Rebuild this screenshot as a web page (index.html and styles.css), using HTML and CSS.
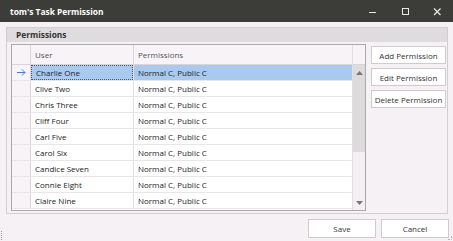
FILE: index.html
```html
<!DOCTYPE html>
<html>
<head>
<meta charset="utf-8">
<link rel="stylesheet" href="styles.css">
</head>
<body>
<div class="window">
  <div class="titlebar">
    <span class="title">tom's Task Permission</span>
    <div class="controls">
      <svg class="ctl" width="32" height="22" viewBox="0 0 32 22"><line x1="12" y1="12.5" x2="19" y2="12.5" stroke="#e8e8e8" stroke-width="1"/></svg>
      <svg class="ctl" width="32" height="22" viewBox="0 0 32 22"><rect x="13.5" y="8.5" width="6" height="6" fill="none" stroke="#e8e8e8" stroke-width="1"/></svg>
      <svg class="ctl" width="32" height="22" viewBox="0 0 32 22"><path d="M13 8.5 L19.5 15 M19.5 8.5 L13 15" stroke="#e8e8e8" stroke-width="1.2"/></svg>
    </div>
  </div>
  <div class="content">
    <div class="group">
      <div class="group-header">Permissions</div>
      <div class="group-body">
        <div class="grid">
          <div class="grid-table">
            <div class="row head">
              <div class="cell ind"></div>
              <div class="cell user">User</div>
              <div class="cell perm">Permissions</div>
            </div>
            <div class="row selected">
              <div class="cell ind"><svg width="9" height="7" viewBox="0 0 9 7"><path d="M0 3.5 H8 M5 0.5 L8 3.5 L5 6.5" fill="none" stroke="#3d7fd6" stroke-width="1"/></svg></div>
              <div class="cell user"><span class="focus">Charlie One</span></div>
              <div class="cell perm">Normal C, Public C</div>
            </div>
            <div class="row"><div class="cell ind"></div><div class="cell user">Clive Two</div><div class="cell perm">Normal C, Public C</div></div>
            <div class="row"><div class="cell ind"></div><div class="cell user">Chris Three</div><div class="cell perm">Normal C, Public C</div></div>
            <div class="row"><div class="cell ind"></div><div class="cell user">Cliff Four</div><div class="cell perm">Normal C, Public C</div></div>
            <div class="row"><div class="cell ind"></div><div class="cell user">Carl Five</div><div class="cell perm">Normal C, Public C</div></div>
            <div class="row"><div class="cell ind"></div><div class="cell user">Carol Six</div><div class="cell perm">Normal C, Public C</div></div>
            <div class="row"><div class="cell ind"></div><div class="cell user">Candice Seven</div><div class="cell perm">Normal C, Public C</div></div>
            <div class="row"><div class="cell ind"></div><div class="cell user">Connie Eight</div><div class="cell perm">Normal C, Public C</div></div>
            <div class="row"><div class="cell ind"></div><div class="cell user">Claire Nine</div><div class="cell perm">Normal C, Public C</div></div>
          </div>
          <div class="vscroll">
            <div class="vs-head"></div>
            <div class="vs-track">
              <div class="vs-btn"><svg width="7" height="4" viewBox="0 0 7 4"><path d="M0 4 L3.5 0 L7 4 Z" fill="#777"/></svg></div>
              <div class="vs-thumb"></div>
              <div class="vs-rest"></div>
              <div class="vs-btn"><svg width="7" height="4" viewBox="0 0 7 4"><path d="M0 0 L3.5 4 L7 0 Z" fill="#777"/></svg></div>
            </div>
          </div>
        </div>
        <div class="side-buttons">
          <div class="btn">Add Permission</div>
          <div class="btn">Edit Permission</div>
          <div class="btn">Delete Permission</div>
        </div>
      </div>
    </div>
    <div class="footer">
      <div class="btn wide">Save</div>
      <div class="btn wide">Cancel</div>
    </div>
  </div>
  <div class="grip-left"></div>
  <div class="grip-right"></div>
</div>
</body>
</html>
```

FILE: styles.css
```css
* { box-sizing: border-box; }
html, body { margin: 0; padding: 0; }
body {
  width: 453px;
  height: 241px;
  overflow: hidden;
  background: #f6f1f4;
  font-family: "Open Sans", "DejaVu Sans", sans-serif;
  font-size: 8px;
  color: #222;
}
.window {
  position: relative;
  width: 453px;
  height: 241px;
  display: flex;
  flex-direction: column;
}
.titlebar {
  height: 22px;
  background: #3c3d39;
  display: flex;
  align-items: center;
  justify-content: space-between;
  padding-left: 10px;
}
.title {
  color: #fff;
  font-weight: 700;
  font-size: 8.4px;
}
.controls { display: flex; }
.ctl { display: block; }
.content {
  display: flex;
  flex-direction: column;
  padding: 5px 4px 0 6px;
}
.group {
  width: 442px;
  height: 187px;
  border: 1px solid #d2cfd1;
  background: #f6f1f4;
  display: flex;
  flex-direction: column;
}
.group-header {
  height: 14px;
  background: #dedcdd;
  font-weight: 700;
  font-size: 8.4px;
  color: #333;
  padding-left: 9px;
  line-height: 14px;
}
.group-body {
  display: flex;
  padding: 2px 1px 2px 4px;
  gap: 5px;
}
.grid {
  width: 355px;
  height: 167px;
  border: 1px solid #a9a9a9;
  background: #fff;
  display: flex;
}
.grid-table {
  width: 340px;
  display: flex;
  flex-direction: column;
}
.row {
  display: grid;
  grid-template-columns: 19px 103px 1fr;
  height: 16px;
  border-bottom: 1px solid #e9e5e8;
}
.row.head {
  height: 20px;
  background: #f7f3f6;
  border-bottom: 1px solid #d8d4d7;
  color: #555;
}
.cell {
  border-right: 1px solid #e2dee1;
  padding-left: 4px;
  display: flex;
  align-items: center;
  white-space: nowrap;
  overflow: hidden;
}
.head .cell { border-right-color: #d8d4d7; }
.cell.ind {
  background: #f7f3f6;
  border-right-color: #d8d4d7;
  padding-left: 1px;
  justify-content: center;
}
.cell.perm { border-right: none; }
.row.selected .cell.user,
.row.selected .cell.perm { background: #aac9ee; }
.focus {
  display: flex;
  align-items: center;
  margin-left: -4px;
  padding-left: 4px;
  width: calc(100% + 4px);
  height: 100%;
  border: 1px dotted #4a5a70;
}
.vscroll {
  width: 13px;
  display: flex;
  flex-direction: column;
  border-left: 1px solid #e2dee1;
}
.vs-head {
  height: 20px;
  background: #f7f3f6;
  border-bottom: 1px solid #d8d4d7;
}
.vs-track {
  flex: 1;
  display: flex;
  flex-direction: column;
  background: #f4eff2;
}
.vs-btn {
  height: 15px;
  display: flex;
  align-items: center;
  justify-content: center;
}
.vs-track .vs-btn:first-child { background: #dcdcdc; }
.vs-thumb {
  height: 72px;
  background: #dcdcdc;
}
.vs-rest { flex: 1; }
.side-buttons {
  display: flex;
  flex-direction: column;
  gap: 4px;
  padding-top: 2px;
}
.btn {
  width: 75px;
  height: 18px;
  background: #fff;
  border: 1px solid #cfcbce;
  display: flex;
  align-items: center;
  justify-content: center;
  color: #333;
  white-space: nowrap;
}
.footer {
  display: flex;
  justify-content: flex-end;
  gap: 5px;
  margin-top: 5px;
}
.btn.wide { width: 68px; height: 19px; }
.grip-left {
  position: absolute;
  left: 1px;
  top: 231px;
  width: 1px;
  height: 9px;
  border-left: 1px dotted #9a8f8a;
}
.grip-right {
  position: absolute;
  right: 1px;
  bottom: 1px;
  width: 4px;
  height: 4px;
  border-right: 1px dotted #b8b4b6;
  border-bottom: 1px dotted #b8b4b6;
}
```
